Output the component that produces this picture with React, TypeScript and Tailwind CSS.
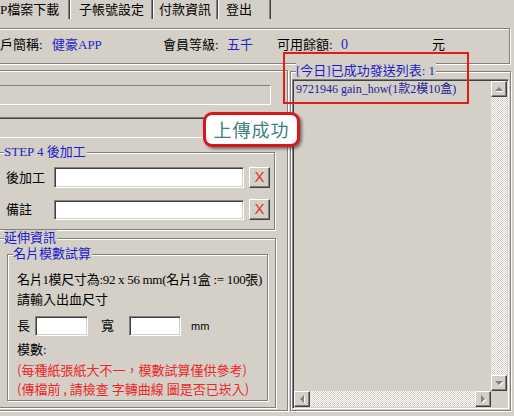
import React from "react"

const etched = "border border-[#808080] shadow-[inset_1px_1px_0_#ffffff,1px_1px_0_#ffffff]"
const sunkenField =
  "bg-white border border-t-[#808080] border-l-[#808080] border-b-white border-r-white shadow-[inset_1px_1px_0_#404040,inset_-1px_-1px_0_#d4d0c8]"
const raised =
  "bg-[#d4d0c8] border border-t-white border-l-white border-b-[#404040] border-r-[#404040] shadow-[inset_-1px_-1px_0_#808080]"

function Tab({ children, className }: { children: React.ReactNode; className: string }) {
  return (
    <div
      className={`h-[19px] flex items-center border-l border-l-white border-r border-r-[#404040] shadow-[inset_-1px_0_0_#808080] ${className}`}
    >
      {children}
    </div>
  )
}

function Group({ label, className, children }: { label: string; className: string; children?: React.ReactNode }) {
  return (
    <div className={`relative ${etched} ${className}`}>
      <span className="absolute -top-[9px] left-[5px] bg-[#d4d0c8] pr-[1px] leading-[16px] text-[#1c1ccc] whitespace-nowrap">
        {label}
      </span>
      {children}
    </div>
  )
}

function XBtn() {
  return (
    <div
      className={`w-[21px] h-[21px] flex items-center justify-center ${raised} text-[#e22b2b] text-[15px] font-['Liberation_Sans',sans-serif]`}
    >
      X
    </div>
  )
}

function Arrow({ dir }: { dir: "up" | "down" | "left" | "right" }) {
  const pts = {
    up: "4,2 0,6 8,6",
    down: "0,2 8,2 4,6",
    left: "2,4 6,0 6,8",
    right: "2,0 6,4 2,8",
  }[dir]
  return (
    <svg width="8" height="8" viewBox="0 0 8 8">
      <polygon points={pts} fill="#ffffff" transform="translate(1,1)" />
      <polygon points={pts} fill="#808080" />
    </svg>
  )
}

function ScrollBtn({ dir }: { dir: "up" | "down" | "left" | "right" }) {
  return (
    <div className={`w-[16px] h-[16px] shrink-0 flex items-center justify-center ${raised}`}>
      <Arrow dir={dir} />
    </div>
  )
}

const track =
  "bg-[repeating-conic-gradient(#ffffff_0%_25%,#d4d0c8_0%_50%)] [background-size:2px_2px]"

export default function App() {
  return (
    <div className="relative w-[514px] h-[416px] overflow-hidden bg-[#d4d0c8] text-[13px] text-black font-['Liberation_Serif','Noto_Sans_CJK_TC',serif]">
      {/* tabs */}
      <div className="flex h-[19px]">
        <Tab className="w-[70px] pl-[0px] border-l-0">P檔案下載</Tab>
        <Tab className="w-[83px] pl-[8px]">子帳號設定</Tab>
        <Tab className="w-[65px] pl-[5px]">付款資訊</Tab>
        <Tab className="w-[53px] pl-[7px]">登出</Tab>
      </div>

      {/* member info */}
      <div className={`mt-[9px] -ml-[2px] w-[512px] h-[36px] pt-[8px] pl-[1px] flex leading-[16px] whitespace-nowrap ${etched}`}>
        <span className="w-[52px] shrink-0">戶簡稱:</span>
        <span className="w-[111px] shrink-0 text-[#2323c8]">健豪APP</span>
        <span className="w-[64px] shrink-0">會員等級:</span>
        <span className="w-[50px] shrink-0 text-[#2323c8]">五千</span>
        <span className="w-[64px] shrink-0">可用餘額:</span>
        <span className="w-[91px] shrink-0 text-[#2323c8] text-[14px]">0</span>
        <span>元</span>
      </div>

      <div className="mt-[6px] flex">
        {/* left column */}
        <div className={`-ml-[2px] w-[290px] h-[341px] flex flex-col ${etched}`}>
          <div className="-ml-[1px] mt-[14px] w-[273px] h-[20px] border border-t-[#808080] border-l-[#808080] border-b-white border-r-white" />
          <div className="-ml-[1px] mt-[12px] w-[273px] h-[21px] border border-t-[#808080] border-l-[#808080] border-b-white border-r-white shadow-[inset_0_1px_0_#404040]" />

          <Group label="STEP 4 後加工" className="-ml-[1px] mt-[14px] w-[277px] h-[78px] pt-[14px] pl-[7px]">
            <div className="flex items-center h-[21px]">
              <span className="w-[48px]">後加工</span>
              <div className={`w-[190px] h-[21px] ${sunkenField}`} />
              <div className="ml-[5px]">
                <XBtn />
              </div>
            </div>
            <div className="flex items-center h-[21px] mt-[11px]">
              <span className="w-[48px]">備註</span>
              <div className={`w-[190px] h-[20px] ${sunkenField}`} />
              <div className="ml-[5px]">
                <XBtn />
              </div>
            </div>
          </Group>

          <Group label="延伸資訊" className="-ml-[1px] mt-[8px] w-[278px] h-[170px] pt-[15px]">
            <Group label="名片模數試算" className="ml-[8px] w-[261px] h-[147px] pt-[15px] pl-[9px]">
              <div className="leading-[20px] whitespace-nowrap tracking-[-0.3px]">名片1模尺寸為:92 x 56 mm(名片1盒 := 100張)</div>
              <div className="leading-[20px]">請輸入出血尺寸</div>
              <div className="mt-[6px] h-[20px] flex items-center">
                <span className="w-[18px]">長</span>
                <div className={`w-[53px] h-[20px] ${sunkenField}`} />
                <span className="ml-[13px] w-[28px]">寬</span>
                <div className={`w-[52px] h-[20px] ${sunkenField}`} />
                <span className="ml-[10px] text-[11px] font-['Liberation_Sans',sans-serif]">mm</span>
              </div>
              <div className="mt-[4px] leading-[20px]">模數:</div>
              <div className="text-[#ee2626] leading-[19px] whitespace-nowrap font-['Noto_Sans_CJK_TC',sans-serif]">
                <div>(每種紙張紙大不一，模數試算僅供參考)</div>
                <div>(傳檔前 , 請檢查 字轉曲線 圖是否已崁入)</div>
              </div>
            </Group>
          </Group>
        </div>

        {/* today's sent list */}
        <Group label="[今日]已成功發送列表: 1" className="ml-[2px] mt-[1px] w-[221px] h-[340px]">
          <div className="ml-[1px] mt-[7px] w-[217px] h-[330px] p-[1px] flex flex-col border border-t-[#808080] border-l-[#808080] border-b-white border-r-white shadow-[inset_1px_1px_0_#404040,inset_-1px_-1px_0_#d4d0c8]">
            <div className="flex h-[310px]">
              <div className="flex-1 min-w-0 pl-[2px] pt-[1px] leading-[15px] text-[12px] text-[#202096] whitespace-nowrap">
                9721946 gain_how(1款2模10盒)
              </div>
              <div className="w-[16px] flex flex-col">
                <ScrollBtn dir="up" />
                <div className={`flex-1 ${track}`} />
                <ScrollBtn dir="down" />
              </div>
            </div>
            <div className="flex h-[16px]">
              <ScrollBtn dir="left" />
              <div className={`flex-1 ${track}`} />
              <ScrollBtn dir="right" />
              <div className="w-[16px]" />
            </div>
          </div>
        </Group>
      </div>

      {/* annotations */}
      <div className="absolute left-[283px] top-[52px] w-[186px] h-[52px] border-2 border-[#e21b1b]" />
      <div className="absolute left-[203px] top-[112px] w-[97px] h-[35px] rounded-[9px] border-[3px] border-[#d81818] bg-white shadow-[2px_2px_3px_rgba(0,0,0,0.45)] flex items-center justify-center text-[18px] tracking-[1px] text-[#3d7f80] font-['Noto_Sans_CJK_TC',sans-serif]">
        上傳成功
      </div>
    </div>
  )
}
